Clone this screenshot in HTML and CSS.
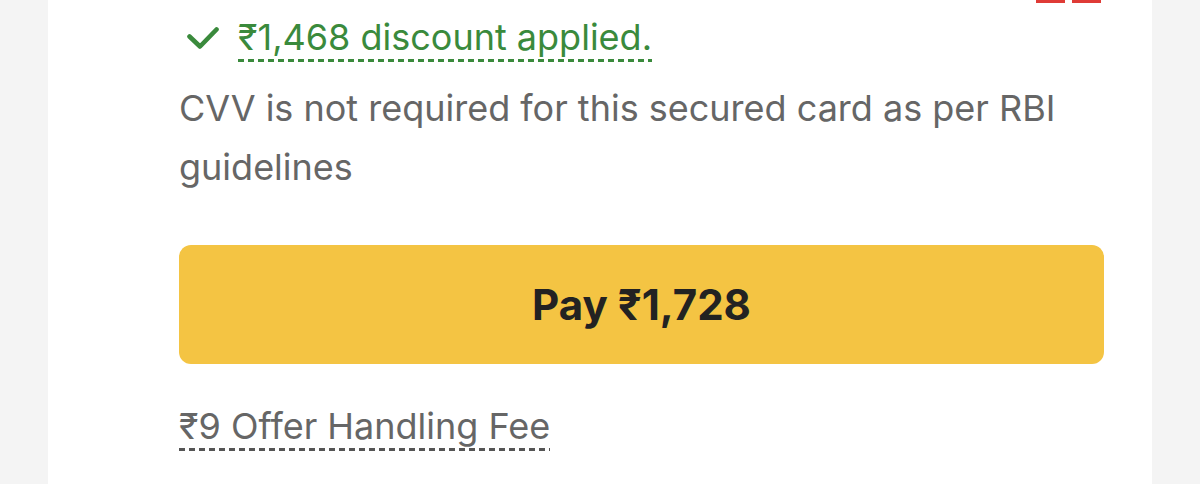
FILE: index.html
```html
<!DOCTYPE html>
<html lang="en">
<head>
    <meta charset="UTF-8">
    <meta name="viewport" content="width=device-width, initial-scale=1.0">
    <title>Payment</title>
    <link rel="stylesheet" href="styles.css">
</head>
<body>

    <div class="sheet">
        <div class="top-marks">
            <span class="mark"></span>
            <span class="mark"></span>
        </div>

        <div class="content">
            <div class="discount">
                <svg class="check" width="32" height="24" viewBox="0 0 32 24">
                    <path d="M2.5 10.5 L13 20.5 L29.5 3.5" fill="none" stroke="#3a8a3c" stroke-width="4.6" stroke-linecap="round" stroke-linejoin="round"/>
                </svg>
                <span class="discount-text dashed">₹1,468 discount applied.</span>
            </div>

            <p class="cvv-note">CVV is not required for this secured card as per RBI guidelines</p>

            <button class="pay-button">Pay ₹1,728</button>

            <div class="fee">
                <span class="fee-text dashed">₹9 Offer Handling Fee</span>
            </div>
        </div>
    </div>

</body>
</html>
```

FILE: styles.css
```css
html, body {
    margin: 0;
    height: 100%;
}
body {
    background-color: #f4f4f4;
    font-family: Inter, "Noto Sans", sans-serif;
}
.sheet {
    position: relative;
    margin: 0 48px;
    height: 100%;
    background-color: #fff;
    overflow: hidden;
}
.top-marks {
    position: absolute;
    top: 0;
    right: 51px;
    display: flex;
    gap: 7px;
}
.mark {
    width: 29px;
    height: 3px;
    background-color: #df3b36;
}
.content {
    padding: 16px 48px 0 131px;
}
.dashed {
    display: inline-block;
    padding-bottom: 3px;
    background-repeat: repeat-x;
    background-position: left bottom;
    background-size: 10px 3px;
}
.discount {
    display: flex;
    align-items: flex-start;
    gap: 19px;
    margin-left: 8px;
}
.check {
    display: block;
    margin-top: 10px;
}
.discount-text {
    color: #3a8a3c;
    font-size: 36px;
    line-height: 43px;
    background-image: linear-gradient(to right, #3a8a3c 60%, transparent 60%);
}
.cvv-note {
    margin: 17px 0 0;
    color: #666;
    font-size: 36px;
    line-height: 59px;
    padding-right: 40px;
}
.pay-button {
    display: block;
    width: 100%;
    height: 119px;
    margin-top: 48px;
    border: none;
    border-radius: 12px;
    background-color: #f4c443;
    color: #222;
    font-family: Inter, "Noto Sans", sans-serif;
    font-size: 42px;
    font-weight: 700;
    cursor: pointer;
}
.fee {
    margin-top: 41px;
}
.fee-text {
    color: #666;
    font-size: 36px;
    line-height: 43px;
    background-image: linear-gradient(to right, #555 60%, transparent 60%);
}
```
